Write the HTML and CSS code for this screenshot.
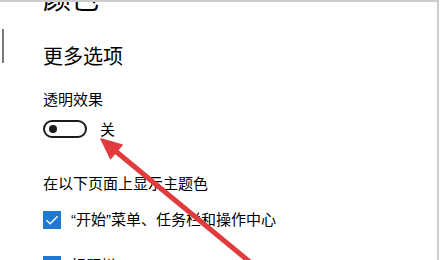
FILE: index.html
```html
<!DOCTYPE html>
<html lang="zh-CN">
<head>
<meta charset="utf-8">
<title>颜色</title>
<link rel="stylesheet" href="styles.css">
</head>
<body>
<div class="frame">
  <div class="rail"><div class="tick"></div></div>
  <div class="content">
    <h1 class="title">颜色</h1>
    <h2 class="section">更多选项</h2>
    <div class="label">透明效果</div>
    <div class="toggle-row">
      <span class="toggle"><span class="knob"></span></span>
      <span class="toggle-text">关</span>
    </div>
    <div class="label heading2">在以下页面上显示主题色</div>
    <div class="check-row">
      <span class="check"><svg viewBox="0 0 18 18" width="18" height="18"><path d="M3.5 9.2 L7.2 12.8 L14.6 5.2" fill="none" stroke="#fff" stroke-width="1.4"/></svg></span>
      <span class="check-text"><span class="q">“</span>开始<span class="q">”</span>菜单、任务栏和操作中心</span>
    </div>
    <div class="check-row second">
      <span class="check"><svg viewBox="0 0 18 18" width="18" height="18"><path d="M3.5 9.2 L7.2 12.8 L14.6 5.2" fill="none" stroke="#fff" stroke-width="1.4"/></svg></span>
      <span class="check-text">标题栏</span>
    </div>
  </div>
</div>
<svg class="arrow" width="442" height="260" viewBox="0 0 442 260">
  <line x1="113" y1="149" x2="262" y2="272" stroke="#e23b3d" stroke-width="5" stroke-linecap="round"/>
  <polygon points="101,139 122,145 110.5,158.5" fill="#e23b3d" stroke="#e23b3d" stroke-width="1.5" stroke-linejoin="round"/>
</svg>
</body>
</html>
```

FILE: styles.css
```css
html, body {
  margin: 0;
  padding: 0;
  background: #fff;
}
body {
  width: 442px;
  height: 260px;
  overflow: hidden;
  position: relative;
  font-family: "Noto Sans CJK SC", "Noto Sans", sans-serif;
  color: #000;
}
.frame {
  display: flex;
  width: 437px;
  height: 260px;
  border-top: 2px solid #cdcdcd;
  border-right: 2px solid #cdcdcd;
  overflow: hidden;
  box-sizing: content-box;
}
.rail {
  width: 43px;
  flex: none;
}
.tick {
  margin-left: 2px;
  margin-top: 27px;
  width: 2px;
  height: 34px;
  background: #7a7a7a;
}
.content {
  flex: 1;
  display: flex;
  flex-direction: column;
  align-items: flex-start;
}
.content > * {
  flex-shrink: 0;
}
.title {
  margin: -23px 0 0 0;
  font-size: 28px;
  line-height: 36px;
  font-weight: normal;
}
.section {
  margin: 27px 0 0 0;
  font-size: 20px;
  line-height: 28px;
  font-weight: normal;
}
.label {
  margin-top: 19px;
  font-size: 15px;
  line-height: 20px;
}
.toggle-row {
  margin-top: 10px;
  display: flex;
  align-items: center;
  gap: 13px;
}
.toggle {
  width: 44px;
  height: 18px;
  box-sizing: border-box;
  border: 2px solid #1b1b1b;
  border-radius: 9px;
  display: flex;
  align-items: center;
  padding-left: 4px;
}
.knob {
  width: 8px;
  height: 8px;
  border-radius: 50%;
  background: #1b1b1b;
}
.toggle-text {
  font-size: 15px;
  line-height: 20px;
}
.heading2 {
  margin-top: 34px;
}
.check-row {
  margin-top: 17px;
  display: flex;
  align-items: center;
  gap: 10px;
}
.check-row.second {
  margin-top: 27px;
}
.check {
  width: 18px;
  height: 18px;
  background: #1f78d1;
  display: block;
}
.check svg {
  display: block;
}
.check-text {
  font-size: 15px;
  line-height: 18px;
}
.q {
  font-family: "Liberation Sans", sans-serif;
}
.arrow {
  position: absolute;
  left: 0;
  top: 0;
}
```
